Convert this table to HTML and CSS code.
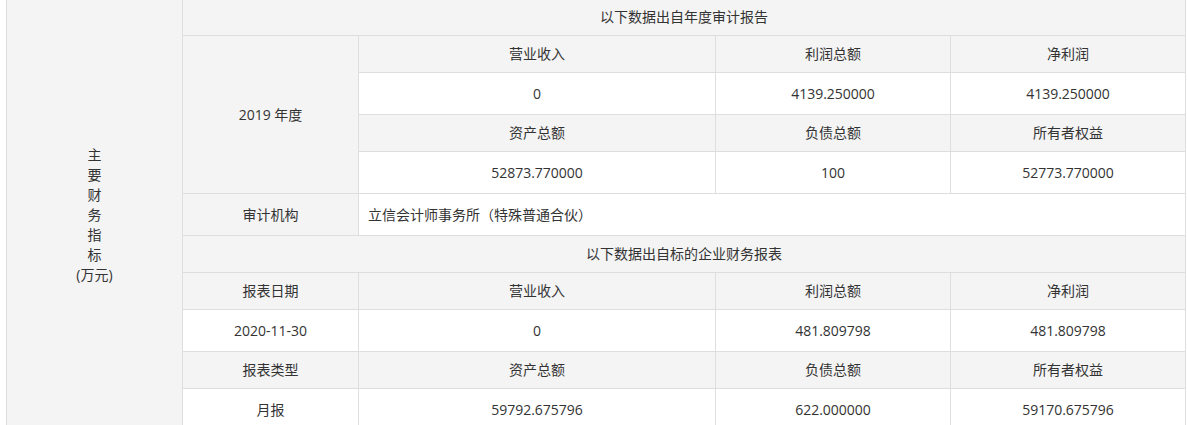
FILE: index.html
```html
<!DOCTYPE html>
<html lang="zh-CN">
<head>
<meta charset="utf-8">
<title>主要财务指标</title>
<link rel="stylesheet" href="styles.css">
</head>
<body>
<div class="wrap">
<table class="fin">
  <colgroup>
    <col class="c1"><col class="c2"><col class="c3"><col class="c4"><col class="c5">
  </colgroup>
  <tbody>
    <tr class="g">
      <td class="side" rowspan="11">主<br>要<br>财<br>务<br>指<br>标<br>(万元)</td>
      <td colspan="4">以下数据出自年度审计报告</td>
    </tr>
    <tr class="g">
      <td rowspan="4">2019 年度</td>
      <td>营业收入</td><td>利润总额</td><td>净利润</td>
    </tr>
    <tr class="w">
      <td>0</td><td>4139.250000</td><td>4139.250000</td>
    </tr>
    <tr class="g">
      <td>资产总额</td><td>负债总额</td><td>所有者权益</td>
    </tr>
    <tr class="w">
      <td>52873.770000</td><td>100</td><td>52773.770000</td>
    </tr>
    <tr class="w">
      <td class="gc">审计机构</td>
      <td colspan="3" class="left">立信会计师事务所（特殊普通合伙）</td>
    </tr>
    <tr class="g">
      <td colspan="4">以下数据出自标的企业财务报表</td>
    </tr>
    <tr class="g">
      <td>报表日期</td><td>营业收入</td><td>利润总额</td><td>净利润</td>
    </tr>
    <tr class="w">
      <td>2020-11-30</td><td>0</td><td>481.809798</td><td>481.809798</td>
    </tr>
    <tr class="g">
      <td>报表类型</td><td>资产总额</td><td>负债总额</td><td>所有者权益</td>
    </tr>
    <tr class="w">
      <td>月报</td><td>59792.675796</td><td>622.000000</td><td>59170.675796</td>
    </tr>
  </tbody>
</table>
</div>
</body>
</html>
```

FILE: styles.css
```css
html, body {
  margin: 0;
  padding: 0;
  background: #fff;
}
body {
  font-family: "Open Sans", "Noto Sans CJK SC", sans-serif;
  font-size: 14px;
  color: #333;
  overflow: hidden;
}
.wrap {
  padding-left: 6px;
  margin-top: -2px;
}
.fin {
  border-collapse: collapse;
  table-layout: fixed;
  width: 1180px;
}
.c1 { width: 176px; }
.c2 { width: 176px; }
.c3 { width: 357px; }
.c4 { width: 235px; }
.c5 { width: 235px; }
.fin td {
  border: 1px solid #dedede;
  text-align: center;
  vertical-align: middle;
  padding: 0 10px;
  background: #fff;
}
.fin tr.g td {
  background: #f4f4f4;
  line-height: 20px;
  padding-top: 8px;
  padding-bottom: 8px;
}
.fin tr.w td {
  line-height: 21px;
  padding-top: 10px;
  padding-bottom: 10px;
}
.fin td.side {
  background: #f4f4f4;
  line-height: 19.7px;
  padding-top: 0;
  padding-bottom: 0;
}
.fin td.gc {
  background: #f4f4f4;
}
.fin td.left {
  text-align: left;
  padding-left: 9px;
}
```
